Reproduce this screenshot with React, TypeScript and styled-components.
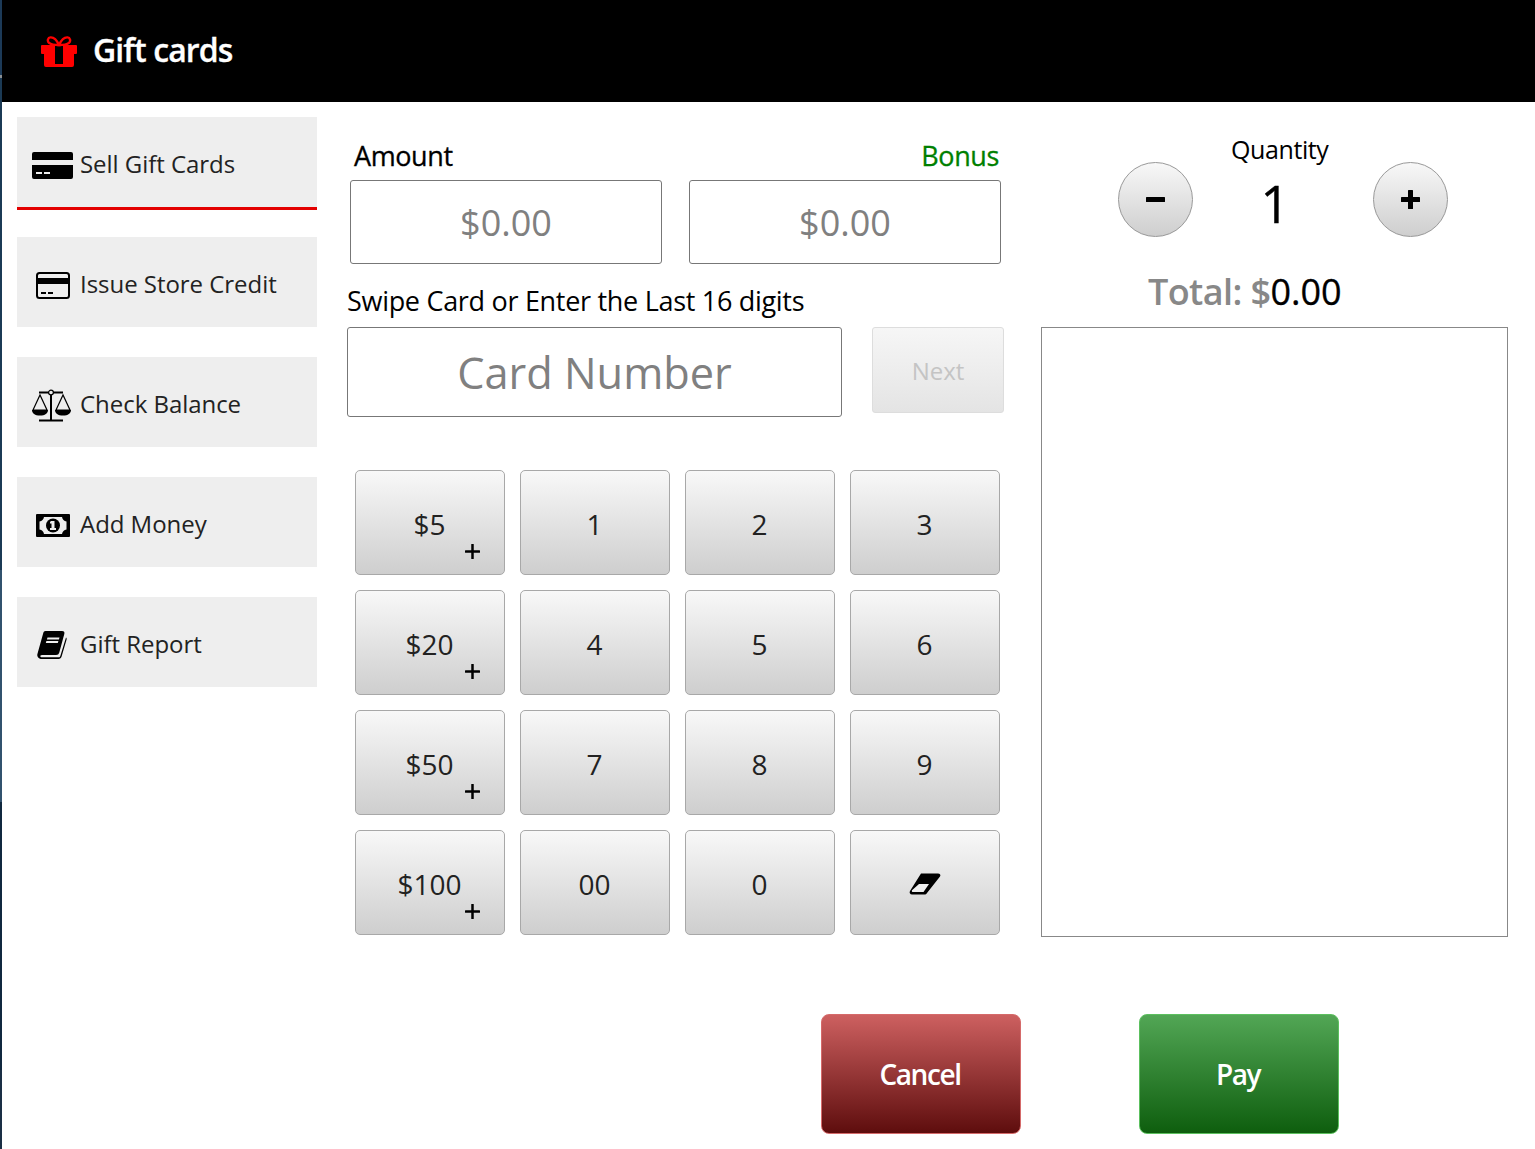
import React from "react";
import styled, { createGlobalStyle } from "styled-components";

const GlobalStyle = createGlobalStyle`
  html, body { margin: 0; padding: 0; background: #fff; }
  body { font-family: "Open Sans", "Noto Sans", sans-serif; overflow: hidden; }
  * { box-sizing: border-box; }
  svg { display: block; }
`;

const Page = styled.div`
  width: 1535px;
  height: 1149px;
  display: flex;
  overflow: hidden;
`;

const DesktopEdge = styled.div`
  width: 2px;
  flex: none;
  background: linear-gradient(to bottom, #1c3a58 0 75px, #8a8f94 75px 78px, #1b3a55 78px 570px, #31526e 570px 802px, #10283f 802px 1070px, #1a2f45 1070px);
`;

const Window = styled.div`
  flex: 1;
  min-width: 0;
`;

const Header = styled.header`
  height: 102px;
  background: #000;
  display: flex;
  align-items: center;
  padding-left: 39px;
  gap: 16px;
`;

const HeaderTitle = styled.h1`
  margin: -4px 0 0;
  color: #fff;
  font-size: 32px;
  font-weight: 600;
  letter-spacing: -0.9px;
  -webkit-text-stroke: 0.3px #fff;
`;

const Body = styled.div`
  display: flex;
  height: 912px;
  padding-left: 15px;
`;

const Sidebar = styled.nav`
  width: 300px;
  flex: none;
  padding-top: 15px;
  display: flex;
  flex-direction: column;
  gap: 30px;
`;

const NavItem = styled.div<{ $active?: boolean }>`
  height: ${({ $active }) => ($active ? "93px" : "90px")};
  margin-bottom: ${({ $active }) => ($active ? "-3px" : "0")};
  padding-top: 2px;
  background: #eee;
  border-bottom: ${({ $active }) => ($active ? "3px solid #e30000" : "none")};
  display: flex;
  align-items: center;
  color: #222;
  font-size: 24px;
  letter-spacing: -0.04px;
`;

const NavIconSlot = styled.span<{ $shift: number }>`
  width: 63px;
  flex: none;
  display: flex;
  justify-content: center;
  padding-left: ${({ $shift }) => $shift}px;
  margin-top: 4px;
`;

const Center = styled.div`
  width: 657px;
  flex: none;
  margin-left: 30px;
`;

const AmountLabels = styled.div`
  display: flex;
  justify-content: space-between;
  padding: 35px 5px 0 7px;
  height: 78px;
  font-size: 27px;
  line-height: 38px;
  letter-spacing: -0.4px;
  -webkit-text-stroke: 0.3px currentColor;
  color: #000;
`;

const BonusLabel = styled.span`
  color: #008000;
`;

const AmountRow = styled.div`
  display: flex;
  gap: 27px;
  padding-left: 3px;
`;

const Field = styled.div<{ $size: number }>`
  border: 1px solid #777;
  border-radius: 3px;
  background: #fff;
  color: #808080;
  display: flex;
  align-items: center;
  justify-content: center;
  font-size: ${({ $size }) => $size}px;
`;

const AmountField = styled(Field)`
  width: 312px;
  height: 84px;
`;

const SwipeLabel = styled.div`
  margin-top: 19px;
  height: 44px;
  font-size: 27px;
  line-height: 36px;
  letter-spacing: -0.3px;
  color: #000;
`;

const CardRow = styled.div`
  display: flex;
  align-items: flex-start;
  gap: 30px;
`;

const CardField = styled(Field)`
  width: 495px;
  height: 90px;
  padding-top: 1px;
`;

const NextButton = styled.div`
  width: 132px;
  height: 86px;
  border: 1px solid #ddd;
  border-radius: 3px;
  background: linear-gradient(to bottom, #f6f6f6, #e4e4e4);
  color: #c4c4c4;
  font-size: 24px;
  display: flex;
  align-items: center;
  justify-content: center;
`;

const Keypad = styled.div`
  margin: 53px 0 0 8px;
  display: grid;
  grid-template-columns: repeat(4, 150px);
  grid-auto-rows: 105px;
  gap: 15px;
`;

const Key = styled.div`
  position: relative;
  padding: 2px 1px 0 0;
  border: 1px solid #a8a8a8;
  border-radius: 5px;
  background: linear-gradient(to bottom, #f8f8f8, #cecece);
  color: #222;
  font-size: 28px;
  display: flex;
  align-items: center;
  justify-content: center;
`;

const KeyPlus = styled.span`
  position: absolute;
  left: 109px;
  top: 73px;
`;

const Right = styled.div`
  width: 467px;
  flex: none;
  margin-left: 37px;
`;

const QuantityLabel = styled.div`
  height: 60px;
  padding: 30px 0 0 190px;
  font-size: 25px;
  line-height: 34px;
  letter-spacing: -0.4px;
  color: #000;
`;

const QuantityRow = styled.div`
  display: flex;
  align-items: center;
  height: 75px;
  margin-left: 77px;
  width: 330px;
  justify-content: space-between;
`;

const RoundButton = styled.div`
  width: 75px;
  height: 75px;
  border-radius: 50%;
  border: 1px solid #999;
  background: linear-gradient(to bottom, #f8f8f8, #cecece);
  display: flex;
  align-items: center;
  justify-content: center;
`;

const QuantityValue = styled.div`
  font-size: 51px;
  line-height: 75px;
  color: #000;
  -webkit-text-stroke: 0.4px #000;
  margin: 7px 0 0 -16px;
`;

const Total = styled.div`
  margin-top: 28px;
  height: 62px;
  padding-left: 107px;
  font-size: 36px;
  line-height: 54px;
  font-weight: 600;
  letter-spacing: -0.6px;
  color: #888;
`;

const TotalValue = styled.span`
  color: #000;
  font-weight: 400;
  letter-spacing: 0;
  -webkit-text-stroke: 0.3px #000;
`;

const CartBox = styled.div`
  height: 610px;
  border: 1px solid #888;
`;

const Footer = styled.div`
  display: flex;
  gap: 118px;
  padding-left: 819px;
`;

const ActionButton = styled.div<{ $tone: "red" | "green" }>`
  width: 200px;
  height: 120px;
  padding-right: 2px;
  border-radius: 8px;
  border: 1px solid ${({ $tone }) => ($tone === "red" ? "#d56a6a" : "#5cc05f")};
  background: ${({ $tone }) =>
    $tone === "red"
      ? "linear-gradient(to bottom, #cd6060, #5e0d0d)"
      : "linear-gradient(to bottom, #52a655, #0e5e0e)"};
  color: #fff;
  font-size: 28px;
  font-weight: 600;
  letter-spacing: -1.4px;
  display: flex;
  align-items: center;
  justify-content: center;
`;

const GiftIcon = () => (
  <svg width="36" height="31" viewBox="0 0 36 31">
    <g fill="none" stroke="#f00" strokeWidth="2.400">
      <path d="M18 9C15.500 3.500 12 1.200 9.500 1.400 6.800 1.600 6 5 8 6.800 9.800 8.400 14 9 18 9Z" />
      <path d="M18 9C20.500 3.500 24 1.200 26.500 1.400 29.200 1.600 30 5 28 6.800 26.200 8.400 22 9 18 9Z" />
    </g>
    <path fillRule="evenodd" d="M1 9h34a1 1 0 0 1 1 1v7a1 1 0 0 1-1 1h-2v11a2 2 0 0 1-2 2H5a2 2 0 0 1-2-2V18H1a1 1 0 0 1-1-1v-7a1 1 0 0 1 1-1Zm13 1v18h8V10Z" fill="#f00" />
  </svg>
);

const CardSolidIcon = () => (
  <svg width="41" height="27" viewBox="0 0 41 27" style={{ marginLeft: -13 }}>
    <path d="M2 0h37a2 2 0 0 1 2 2v6H0V2a2 2 0 0 1 2-2ZM0 13h41v12a2 2 0 0 1-2 2H2a2 2 0 0 1-2-2Z" fill="#000" />
    <rect x="4" y="20" width="6" height="2" fill="#eee" />
    <rect x="12" y="20" width="6" height="2" fill="#eee" />
  </svg>
);

const CardOutlineIcon = () => (
  <svg width="34" height="27" viewBox="0 0 34 27" style={{ marginLeft: -5 }}>
    <rect x="1" y="1" width="32" height="25" rx="2.500" fill="none" stroke="#000" strokeWidth="2" />
    <rect x="1" y="6" width="32" height="6" fill="#000" />
    <rect x="5" y="20" width="5" height="2" fill="#000" />
    <rect x="12" y="20" width="5" height="2" fill="#000" />
  </svg>
);

const ScaleIcon = () => (
  <svg width="39" height="33" viewBox="0 0 39 33" style={{ marginLeft: -13 }}>
    <g fill="none" stroke="#000" strokeWidth="1.200">
      <path d="M7 3.500h24M7 31.500h24" strokeWidth="2" />
      <path d="M19 6v25" strokeWidth="2" />
      <circle cx="19" cy="3.500" r="2.400" fill="#eee" />
      <path d="M1 21 8 6l7 15Z" />
      <path d="M24 21 31 6l7 15Z" />
    </g>
    <path d="M0 21h16c0 3.500-3 5.500-8 5.500S0 24.500 0 21ZM23 21h16c0 3.500-3 5.500-8 5.500S23 24.500 23 21Z" fill="#000" />
  </svg>
);

const MoneyIcon = () => (
  <svg width="34" height="23" viewBox="0 0 34 23" style={{ marginLeft: -4 }}>
    <rect width="34" height="23" rx="1" fill="#000" />
    <path d="M8 3h18c.5 2.500 2 4 4.500 4.500v8c-2.500.5-4 2-4.500 4.500H8c-.5-2.500-2-4-4.500-4.500v-8C6 7 7.500 5.500 8 3Z" fill="#eee" />
    <circle cx="17" cy="11.500" r="7" fill="#000" />
    <path d="M15 7h3.500v7H20v2h-6v-2h1.500v-4.500H14V8Z" fill="#eee" />
  </svg>
);

const BookIcon = () => (
  <svg width="30" height="28" viewBox="0 0 30 28" style={{ marginLeft: -6 }}>
    <path d="M8.500 0h16.500c2 0 2.800 1.300 2.300 3l-5 18.500c-.5 1.700-1.500 2.500-3.300 2.500H5c-1.500 0-2 1-1.500 1.700.4.500 1 .6 1.800.6h16.500c.8 0 1.200-.3 1.500-1.200L29 6.500c.4.400.9.900.6 2l-5 17c-.5 1.600-1.500 2.500-3 2.500H5C2 28 0 26 .3 23.500c.1-.8.400-1.500.6-2.300L6 3C6.400 1.300 7 0 8.500 0Z" fill="#000" />
    <path d="M10.500 6.500h12l-.6 2H9.900ZM9.400 10h12l-.6 2h-12Z" fill="#eee" />
  </svg>
);

const EraserIcon = () => (
  <svg width="32" height="22" viewBox="0 0 32 22">
    <path d="M12 .5H29c2 0 3 1.500 2 3L18 20c-.6 1-1.500 1.500-2.500 1.500H3c-2 0-3-2-2-3.500Z" fill="#000" />
    <path d="M10 11H20L14.500 19H4c-1 0-1.500-1-1-1.800Z" fill="#eee" />
  </svg>
);

const PlusIcon = ({ size, weight }: { size: number; weight: number }) => (
  <svg width={size} height={size} viewBox={`0 0 ${size} ${size}`} fill="#000">
    <rect x={(size - weight) / 2} y="0" width={weight} height={size} rx="0.500" />
    <rect x="0" y={(size - weight) / 2} width={size} height={weight} rx="0.500" />
  </svg>
);

const MinusIcon = () => (
  <svg width="19" height="5" viewBox="0 0 19 5" fill="#000">
    <rect width="19" height="5" rx="0.500" />
  </svg>
);

const navItems = [
  { label: "Sell Gift Cards", icon: <CardSolidIcon />, active: true, shift: 21 },
  { label: "Issue Store Credit", icon: <CardOutlineIcon />, shift: 14 },
  { label: "Check Balance", icon: <ScaleIcon />, shift: 18 },
  { label: "Add Money", icon: <MoneyIcon />, shift: 13 },
  { label: "Gift Report", icon: <BookIcon />, shift: 13 },
];

const keys: { label?: string; preset?: boolean; eraser?: boolean }[] = [
  { label: "$5", preset: true },
  { label: "1" },
  { label: "2" },
  { label: "3" },
  { label: "$20", preset: true },
  { label: "4" },
  { label: "5" },
  { label: "6" },
  { label: "$50", preset: true },
  { label: "7" },
  { label: "8" },
  { label: "9" },
  { label: "$100", preset: true },
  { label: "00" },
  { label: "0" },
  { eraser: true },
];

export default function App() {
  return (
    <Page>
      <GlobalStyle />
      <DesktopEdge />
      <Window>
        <Header>
          <GiftIcon />
          <HeaderTitle>Gift cards</HeaderTitle>
        </Header>
        <Body>
          <Sidebar>
            {navItems.map((item) => (
              <NavItem key={item.label} $active={item.active}>
                <NavIconSlot $shift={item.shift}>{item.icon}</NavIconSlot>
                {item.label}
              </NavItem>
            ))}
          </Sidebar>
          <Center>
            <AmountLabels>
              <span>Amount</span>
              <BonusLabel>Bonus</BonusLabel>
            </AmountLabels>
            <AmountRow>
              <AmountField $size={36}>$0.00</AmountField>
              <AmountField $size={36}>$0.00</AmountField>
            </AmountRow>
            <SwipeLabel>Swipe Card or Enter the Last 16 digits</SwipeLabel>
            <CardRow>
              <CardField $size={43.3}>Card Number</CardField>
              <NextButton>Next</NextButton>
            </CardRow>
            <Keypad>
              {keys.map((key, i) => (
                <Key key={i}>
                  {key.eraser ? <EraserIcon /> : key.label}
                  {key.preset && (
                    <KeyPlus>
                      <PlusIcon size={15} weight={2.500} />
                    </KeyPlus>
                  )}
                </Key>
              ))}
            </Keypad>
          </Center>
          <Right>
            <QuantityLabel>Quantity</QuantityLabel>
            <QuantityRow>
              <RoundButton>
                <MinusIcon />
              </RoundButton>
              <QuantityValue>1</QuantityValue>
              <RoundButton>
                <PlusIcon size={19} weight={5} />
              </RoundButton>
            </QuantityRow>
            <Total>
              Total: $<TotalValue>0.00</TotalValue>
            </Total>
            <CartBox />
          </Right>
        </Body>
        <Footer>
          <ActionButton $tone="red">Cancel</ActionButton>
          <ActionButton $tone="green">Pay</ActionButton>
        </Footer>
      </Window>
    </Page>
  );
}
